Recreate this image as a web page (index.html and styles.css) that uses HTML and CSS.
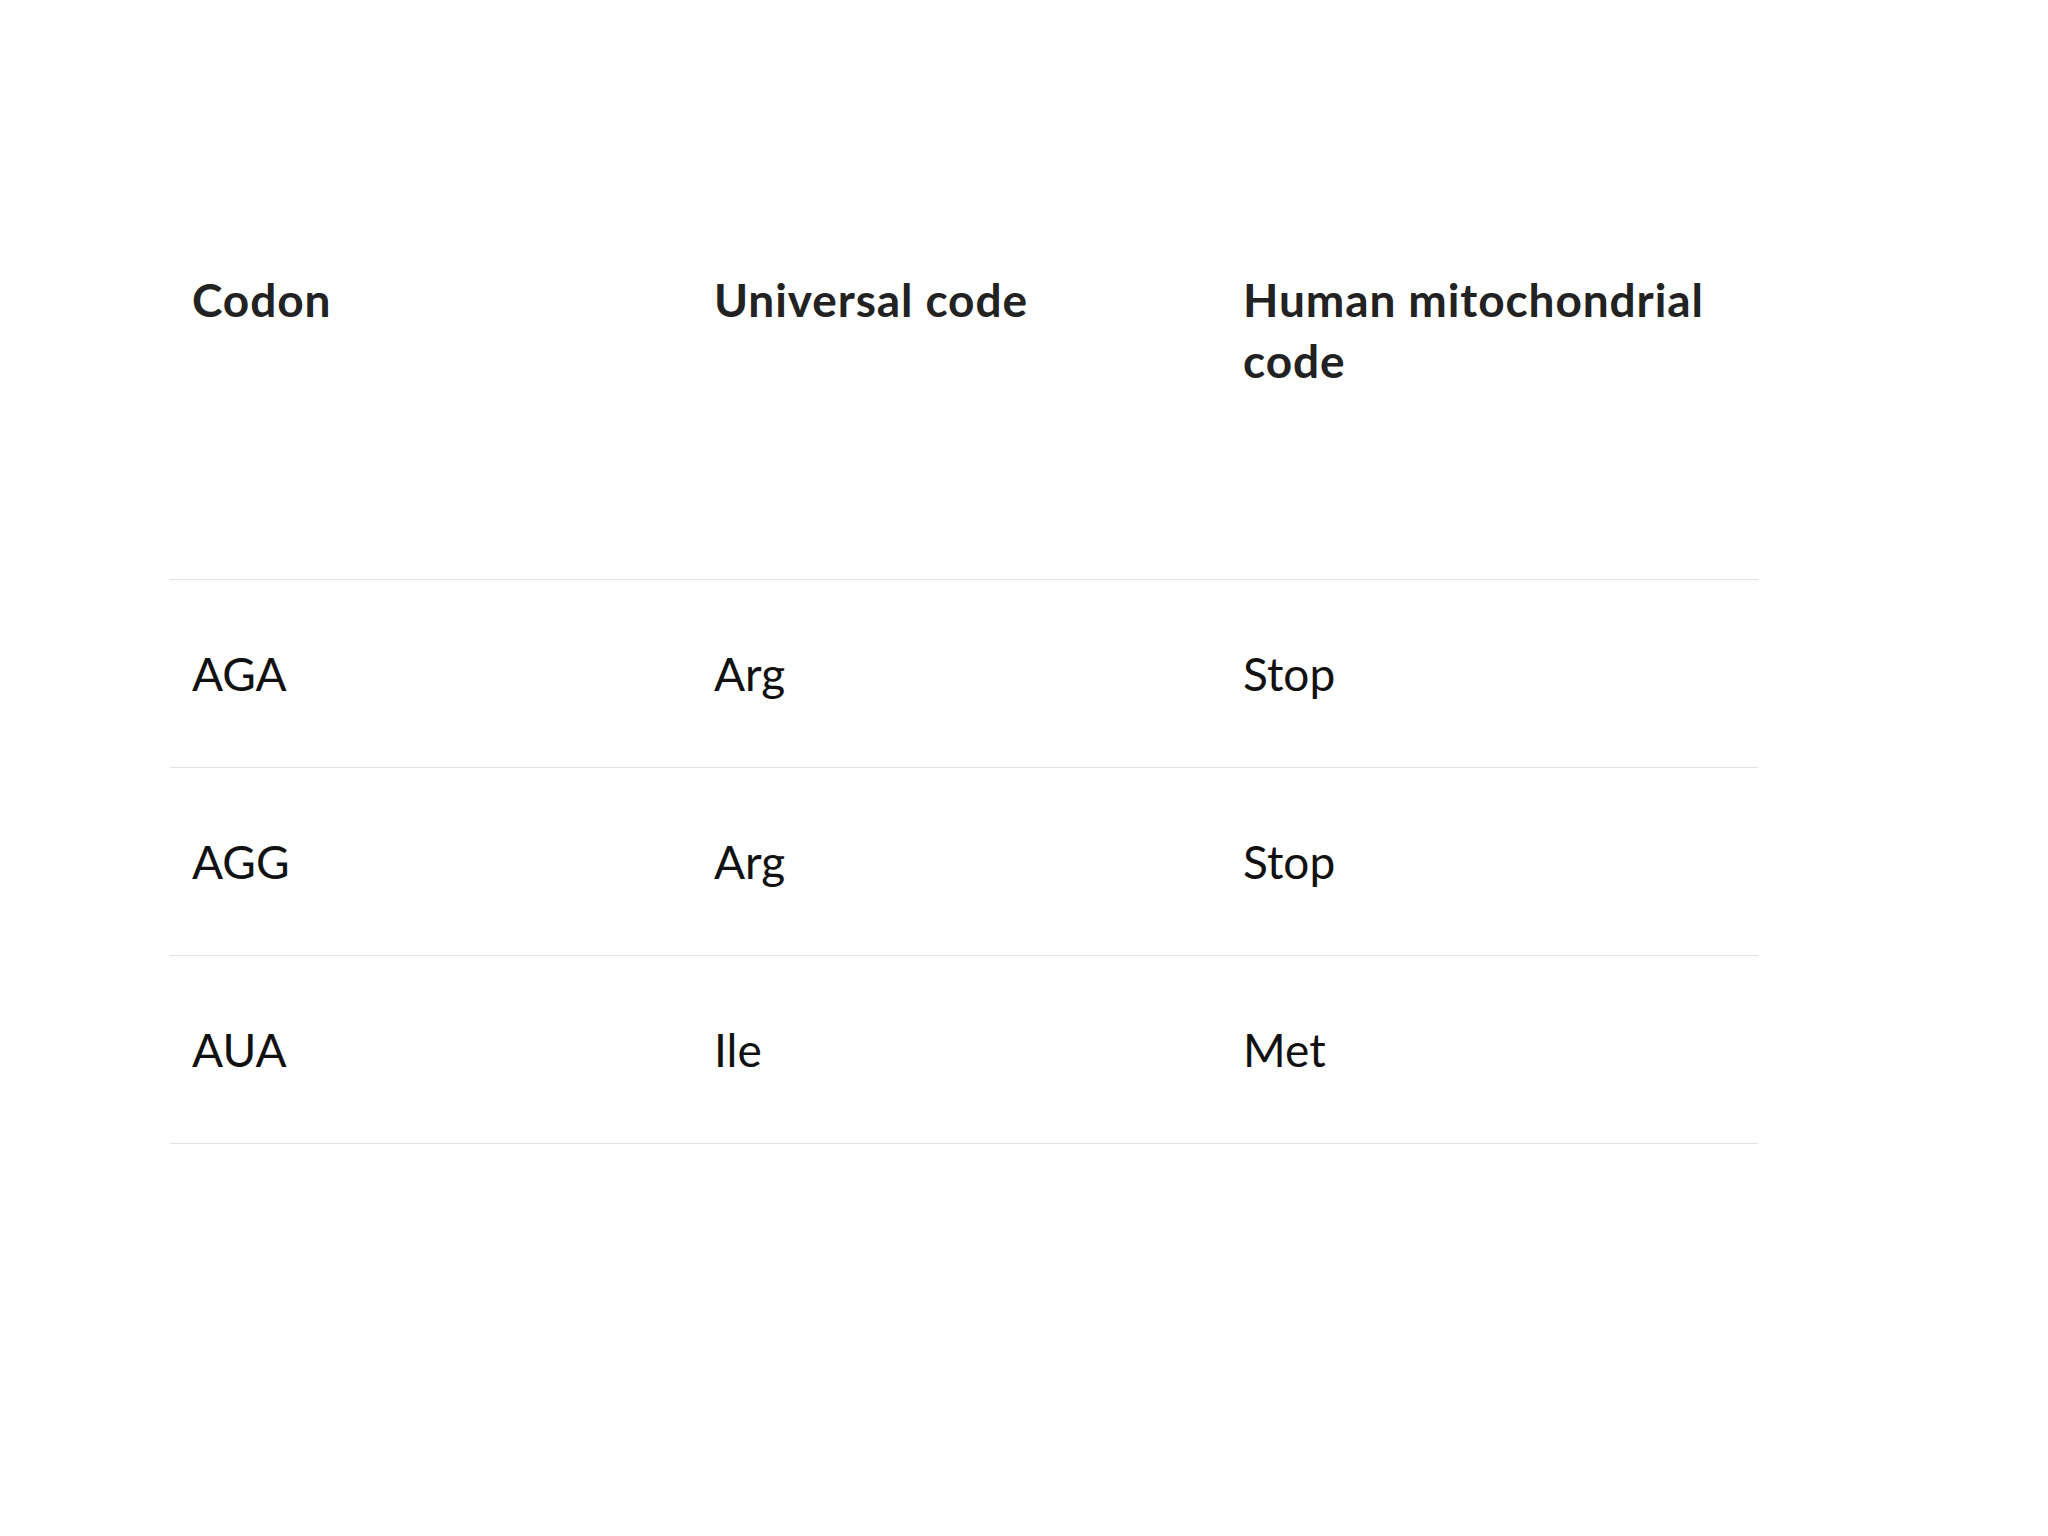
FILE: index.html
```html
<!DOCTYPE html>
<html lang="en">
<head>
<meta charset="utf-8">
<title>Codon table</title>
<link rel="stylesheet" href="styles.css">
</head>
<body>
<div class="page">
  <table class="codes">
    <thead>
      <tr>
        <th class="col-codon">Codon</th>
        <th class="col-universal">Universal code</th>
        <th class="col-human">Human mitochondrial code</th>
      </tr>
    </thead>
    <tbody>
      <tr><td>AGA</td><td>Arg</td><td>Stop</td></tr>
      <tr><td>AGG</td><td>Arg</td><td>Stop</td></tr>
      <tr><td>AUA</td><td>Ile</td><td>Met</td></tr>
    </tbody>
  </table>
</div>
</body>
</html>
```

FILE: styles.css
```css
html, body {
  margin: 0;
  padding: 0;
  background: #ffffff;
}

.page {
  padding: 207px 0 0 170px;
  font-family: Lato, "Open Sans", "Liberation Sans", sans-serif;
}

.codes {
  width: 1588px;
  table-layout: fixed;
  border-collapse: collapse;
}

.codes th,
.codes td {
  box-sizing: border-box;
}

.col-codon { width: 522px; }
.col-universal { width: 529px; }
.col-human { width: 537px; }

.codes th {
  text-align: left;
  vertical-align: top;
  font-size: 46px;
  line-height: 61px;
  font-weight: 700;
  color: #222222;
  letter-spacing: 0.9px;
  padding: 62px 22px 188px 22px;
  border-bottom: 1px solid #e2e2e2;
}

.codes td {
  text-align: left;
  font-size: 46px;
  line-height: 61px;
  font-weight: 400;
  color: #111111;
  padding: 63px 22px 63px 22px;
  border-bottom: 1px solid #e2e2e2;
}
```
